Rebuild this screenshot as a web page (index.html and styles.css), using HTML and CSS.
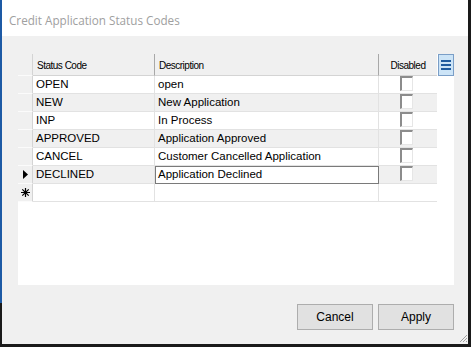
FILE: index.html
```html
<!DOCTYPE html>
<html>
<head>
    <title>Credit Application Status Codes</title>
    <link rel="stylesheet" href="styles.css">
</head>
<body>
    <div class="window">
        <div class="titlebar">Credit Application Status Codes</div>

        <div class="content">
            <div class="grid">
                <div class="row head">
                    <div class="rh"></div>
                    <div class="hc">Status Code</div>
                    <div class="hc">Description</div>
                    <div class="hc center">Disabled</div>
                    <div class="menu-btn"><span></span><span></span><span></span></div>
                </div>

                <div class="row">
                    <div class="rh"></div>
                    <div class="c">OPEN</div>
                    <div class="c">open</div>
                    <div class="c chk"><span class="box"></span></div>
                </div>
                <div class="row alt">
                    <div class="rh"></div>
                    <div class="c">NEW</div>
                    <div class="c">New Application</div>
                    <div class="c chk"><span class="box"></span></div>
                </div>
                <div class="row">
                    <div class="rh"></div>
                    <div class="c">INP</div>
                    <div class="c">In Process</div>
                    <div class="c chk"><span class="box"></span></div>
                </div>
                <div class="row alt">
                    <div class="rh"></div>
                    <div class="c">APPROVED</div>
                    <div class="c">Application Approved</div>
                    <div class="c chk"><span class="box"></span></div>
                </div>
                <div class="row">
                    <div class="rh"></div>
                    <div class="c">CANCEL</div>
                    <div class="c">Customer Cancelled Application</div>
                    <div class="c chk"><span class="box"></span></div>
                </div>
                <div class="row alt">
                    <div class="rh">
                        <svg width="5" height="9" viewBox="0 0 5 9"><path d="M0 0 L5 4.5 L0 9 Z" fill="#000"/></svg>
                    </div>
                    <div class="c">DECLINED</div>
                    <div class="c edit">Application Declined</div>
                    <div class="c chk"><span class="box"></span></div>
                </div>
                <div class="row newrow">
                    <div class="rh">
                        <svg width="9" height="9" viewBox="0 0 9 9"><path d="M4.5 0 V9 M0 4.5 H9 M1.3 1.3 L7.7 7.7 M7.7 1.3 L1.3 7.7" stroke="#000" stroke-width="1.2"/></svg>
                    </div>
                    <div class="c"></div>
                    <div class="c"></div>
                    <div class="c"></div>
                </div>
            </div>

            <div class="buttons">
                <button class="btn">Cancel</button>
                <button class="btn">Apply</button>
            </div>
        </div>

        <svg class="grip" width="9" height="9" viewBox="0 0 9 9"><path d="M8 1 L1 8 M8 4 L4 8 M8 7 L7 8" stroke="#a0a0a0" stroke-width="1"/></svg>
    </div>
</body>
</html>
```

FILE: styles.css
```css
body { margin: 0; background: #fff; font-family: "Liberation Sans", Arial, sans-serif; }
.window { position: relative; width: 471px; height: 347px; box-sizing: border-box; padding-left: 2px; border-right: 3px solid #1a1a1a; border-bottom: 3px solid #1a1a1a; background: linear-gradient(#1d5aa5 303px, #1a1a1a 303px); display: flex; flex-direction: column; }
.titlebar { height: 36px; background: #fff; color: #a0a0a0; font-family: "Segoe UI", "Open Sans", sans-serif; font-size: 11.7px; padding-left: 7px; line-height: 41px; box-sizing: border-box; }
.content { flex: 1; background: #f0f0f0; padding: 18px 14px 0 16px; display: flex; flex-direction: column; }
.grid { height: 231px; background: #fff; }
.row { display: grid; grid-template-columns: 15px 122px 224px 58px 17px; height: 18px; }
.row > div { box-sizing: border-box; }
.row.head { height: 22px; }
.rh { background: #f0f0f0; border-right: 1px solid #d4d4d4; border-bottom: 1px solid #fbfbfb; display: flex; align-items: center; justify-content: center; }
.hc { background: #f0f0f0; border-right: 1px solid #a8a8a8; border-bottom: 1px solid #d4d4d4; font-size: 10px; letter-spacing: -0.5px; color: #000; padding: 6px 0 0 4px; }
.hc.center { text-align: center; padding-left: 0; border-right: none; }
.menu-btn { margin-left: 1px; background: #cce4f7; border: 1px solid #7a9ec7; display: flex; flex-direction: column; align-items: center; justify-content: center; gap: 2px; }
.menu-btn span { width: 10px; height: 2px; background: #1f5b9f; }
.c { border-right: 1px solid #e2e2e2; border-bottom: 1px solid #e2e2e2; font-size: 11.5px; color: #000; padding: 2px 0 0 3px; white-space: nowrap; overflow: hidden; }
.row.alt .c { background: #f0f0f0; }
.c.edit { background: #fff !important; border: 1px solid #7a7a7a; padding: 1px 0 0 2px; }
.c.chk { padding: 0 0 0 21px; border-right: none; }
.box { display: block; width: 13px; height: 15px; box-sizing: border-box; background: #fff; border-top: 2px solid #8c8c8c; border-left: 2px solid #8c8c8c; border-right: 1px solid #e6e6e6; border-bottom: 1px solid #e6e6e6; }
.newrow .c { background: #fff; }
.newrow .c:nth-child(4) { border-right: none; }
.buttons { display: flex; justify-content: flex-end; gap: 5px; margin-top: 19px; }
.btn { width: 76px; height: 26px; background: #e1e1e1; border: 1px solid #adadad; font-family: "Liberation Sans", Arial, sans-serif; font-size: 12px; color: #000; padding: 0; }
.grip { position: absolute; right: 0; bottom: 1px; }
```
